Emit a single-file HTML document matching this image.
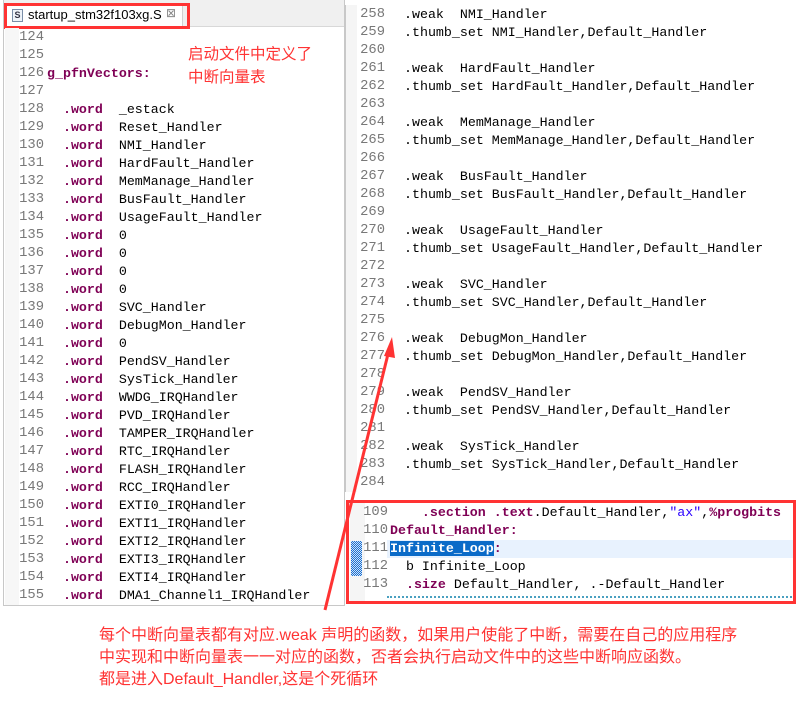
<!DOCTYPE html>
<html><head><meta charset="utf-8"><style>
*{margin:0;padding:0;box-sizing:border-box}
body{width:799px;height:708px;background:#fff;position:relative;overflow:hidden;font-family:"Liberation Mono",monospace;font-size:13.3px}
.ln{position:absolute;color:#787878;white-space:pre;line-height:18px;text-align:right;font-size:13.8px}
.code{position:absolute;white-space:pre;line-height:18px;color:#000}
.k{color:#7f0055;font-weight:bold}
.s{color:#2a00ff}
.ann{position:absolute;color:#ff3333;font-family:"Liberation Sans","Noto Sans CJK SC",sans-serif;font-size:16px;line-height:22px;white-space:pre}
</style></head><body>
<!-- left panel -->
<div style="position:absolute;left:3px;top:0;width:342px;height:606px;border-left:1px solid #c8c8c8;border-right:1px solid #c8c8c8;border-bottom:1px solid #c8c8c8"></div>
<div style="position:absolute;left:4px;top:0;width:340px;height:27px;background:#f0f0f0;border-bottom:1px solid #d8d8d8"></div>
<div style="position:absolute;left:5px;top:3px;width:178px;height:25px;background:#fff;border:1px solid #d0d0d0;border-bottom:none"></div>
<div style="position:absolute;left:12px;top:9px;width:11px;height:13px;border:1px solid #7a8ea8;background:#eef3f9;font:bold 9px 'Liberation Sans',sans-serif;color:#334;text-align:center;line-height:11px">S</div>
<div style="position:absolute;left:28px;top:7px;font:13px 'Liberation Sans',sans-serif;color:#000">startup_stm32f103xg.S</div>
<div style="position:absolute;left:166px;top:6px;font:12px 'DejaVu Sans',sans-serif;color:#888">⊠</div>
<div style="position:absolute;left:4px;top:3px;width:186px;height:26px;border:3px solid #ff3333"></div>
<div style="position:absolute;left:5px;top:28px;width:14px;height:577px;background:#f7f7f7"></div>
<div class="ln" style="left:14px;top:29px;width:30px">124
125
126
127
128
129
130
131
132
133
134
135
136
137
138
139
140
141
142
143
144
145
146
147
148
149
150
151
152
153
154
155</div>
<div class="code" style="left:47px;top:29px">

<span class="k">g_pfnVectors:</span>

  <span class="k">.word</span>  _estack
  <span class="k">.word</span>  Reset_Handler
  <span class="k">.word</span>  NMI_Handler
  <span class="k">.word</span>  HardFault_Handler
  <span class="k">.word</span>  MemManage_Handler
  <span class="k">.word</span>  BusFault_Handler
  <span class="k">.word</span>  UsageFault_Handler
  <span class="k">.word</span>  0
  <span class="k">.word</span>  0
  <span class="k">.word</span>  0
  <span class="k">.word</span>  0
  <span class="k">.word</span>  SVC_Handler
  <span class="k">.word</span>  DebugMon_Handler
  <span class="k">.word</span>  0
  <span class="k">.word</span>  PendSV_Handler
  <span class="k">.word</span>  SysTick_Handler
  <span class="k">.word</span>  WWDG_IRQHandler
  <span class="k">.word</span>  PVD_IRQHandler
  <span class="k">.word</span>  TAMPER_IRQHandler
  <span class="k">.word</span>  RTC_IRQHandler
  <span class="k">.word</span>  FLASH_IRQHandler
  <span class="k">.word</span>  RCC_IRQHandler
  <span class="k">.word</span>  EXTI0_IRQHandler
  <span class="k">.word</span>  EXTI1_IRQHandler
  <span class="k">.word</span>  EXTI2_IRQHandler
  <span class="k">.word</span>  EXTI3_IRQHandler
  <span class="k">.word</span>  EXTI4_IRQHandler
  <span class="k">.word</span>  DMA1_Channel1_IRQHandler</div>
<div class="ann" style="left:188px;top:43px;line-height:23px;font-size:15.5px">启动文件中定义了
中断向量表</div>
<!-- right panel -->
<div style="position:absolute;left:345px;top:5px;width:12px;height:487px;background:#f5f5f5;border-left:1px solid #c8c8c8"></div>
<div class="ln" style="left:356px;top:6px;width:29px">258
259
260
261
262
263
264
265
266
267
268
269
270
271
272
273
274
275
276
277
278
279
280
281
282
283
284</div>
<div class="code" style="left:404px;top:6px">.weak  NMI_Handler
.thumb_set NMI_Handler,Default_Handler

.weak  HardFault_Handler
.thumb_set HardFault_Handler,Default_Handler

.weak  MemManage_Handler
.thumb_set MemManage_Handler,Default_Handler

.weak  BusFault_Handler
.thumb_set BusFault_Handler,Default_Handler

.weak  UsageFault_Handler
.thumb_set UsageFault_Handler,Default_Handler

.weak  SVC_Handler
.thumb_set SVC_Handler,Default_Handler

.weak  DebugMon_Handler
.thumb_set DebugMon_Handler,Default_Handler

.weak  PendSV_Handler
.thumb_set PendSV_Handler,Default_Handler

.weak  SysTick_Handler
.thumb_set SysTick_Handler,Default_Handler
</div>
<!-- popup -->
<div style="position:absolute;left:347px;top:500px;width:449px;height:104px;background:#fff;overflow:hidden">
 <div style="position:absolute;left:3px;top:0;width:15px;height:104px;background:#f5f5f5"></div>
 <div style="position:absolute;left:40px;top:40px;width:409px;height:18px;background:#e8f2fe"></div>
 <div style="position:absolute;left:4px;top:41px;width:11px;height:35px;background:repeating-conic-gradient(#1a6fd0 0 25%,#cfe2f8 0 50%) 0 0/2px 2px"></div>
 <div style="position:absolute;left:40px;top:96px;width:409px;border-top:2px dotted #4aa0c0"></div>
</div>
<div class="ln" style="left:360px;top:504px;width:28px">109
110
111
112
113</div>
<div class="code" style="left:390px;top:504px">    <span class="k">.section</span> <span class="k">.text</span>.Default_Handler,<span class="s">"ax"</span>,<span class="k">%progbits</span>
<span class="k">Default_Handler:</span>
<span class="k" style="background:#0b6bc8;color:#fff">Infinite_Loop</span><span class="k">:</span>
  b Infinite_Loop
  <span class="k">.size</span> Default_Handler, .-Default_Handler</div>
<div style="position:absolute;left:346px;top:500px;width:450px;height:104px;border:3px solid #ff3333"></div>
<!-- arrow -->
<svg style="position:absolute;left:0;top:0" width="799" height="708">
<line x1="325" y1="610" x2="389" y2="350" stroke="#ff3333" stroke-width="3"/>
<polygon points="392,337 384,356 395,358" fill="#ff3333"/>
</svg>
<div class="ann" style="left:99px;top:625px">每个中断向量表都有对应.weak 声明的函数，如果用户使能了中断，需要在自己的应用程序
中实现和中断向量表一一对应的函数，否者会执行启动文件中的这些中断响应函数。
都是进入Default_Handler,这是个死循环</div>
</body></html>
